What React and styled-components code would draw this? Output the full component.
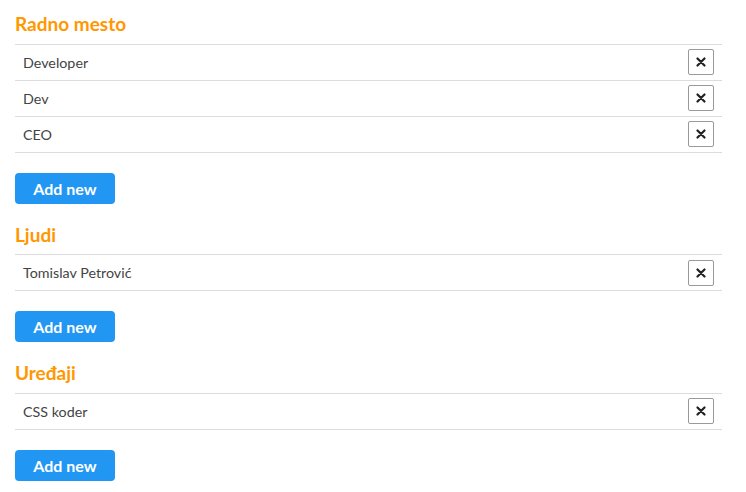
import styled, { createGlobalStyle } from "styled-components";

const GlobalStyle = createGlobalStyle`
  body {
    margin: 0;
    background: #fff;
    font-family: Lato, "Open Sans", sans-serif;
  }
`;

const sections = [
  { title: "Radno mesto", items: ["Developer", "Dev", "CEO"] },
  { title: "Ljudi", items: ["Tomislav Petrović"] },
  { title: "Uređaji", items: ["CSS koder"] },
];

const Page = styled.div`
  padding: 13px 24px 12px 15px;
`;

const Section = styled.section`
  & + & {
    margin-top: 20px;
  }
`;

const Title = styled.h2`
  margin: 0 0 8px;
  font-size: 19px;
  line-height: 22.5px;
  font-weight: 700;
  color: #ff9800;
`;

const List = styled.div`
  border-bottom: 1px solid #dddddd;
`;

const Row = styled.div`
  display: flex;
  align-items: center;
  justify-content: space-between;
  height: 35px;
  padding: 0 8px;
  border-top: 1px solid #dddddd;
  font-size: 14.3px;
  color: #444;
`;

const RemoveButton = styled.button`
  display: flex;
  align-items: center;
  justify-content: center;
  width: 26px;
  height: 26px;
  padding: 0;
  background: #fff;
  border: 1px solid #999;
  border-radius: 2px;
  color: #222;
  cursor: pointer;
`;

const AddButton = styled.button`
  display: block;
  margin-top: 20px;
  width: 100px;
  height: 31px;
  padding: 0;
  border: none;
  border-radius: 4px;
  background: #2196f3;
  color: #fff;
  font-family: inherit;
  font-size: 16px;
  font-weight: 700;
  cursor: pointer;
`;

const Cross = () => (
  <svg width="10" height="10" viewBox="0 0 10 10">
    <path d="M1.5 1.5 L8.5 8.5 M8.5 1.5 L1.5 8.5" stroke="currentColor" strokeWidth="2.2" strokeLinecap="round" />
  </svg>
);

export default function App() {
  return (
    <Page>
      <GlobalStyle />
      {sections.map((s) => (
        <Section key={s.title}>
          <Title>{s.title}</Title>
          <List>
            {s.items.map((item) => (
              <Row key={item}>
                <span>{item}</span>
                <RemoveButton aria-label="Remove">
                  <Cross />
                </RemoveButton>
              </Row>
            ))}
          </List>
          <AddButton>Add new</AddButton>
        </Section>
      ))}
    </Page>
  );
}
